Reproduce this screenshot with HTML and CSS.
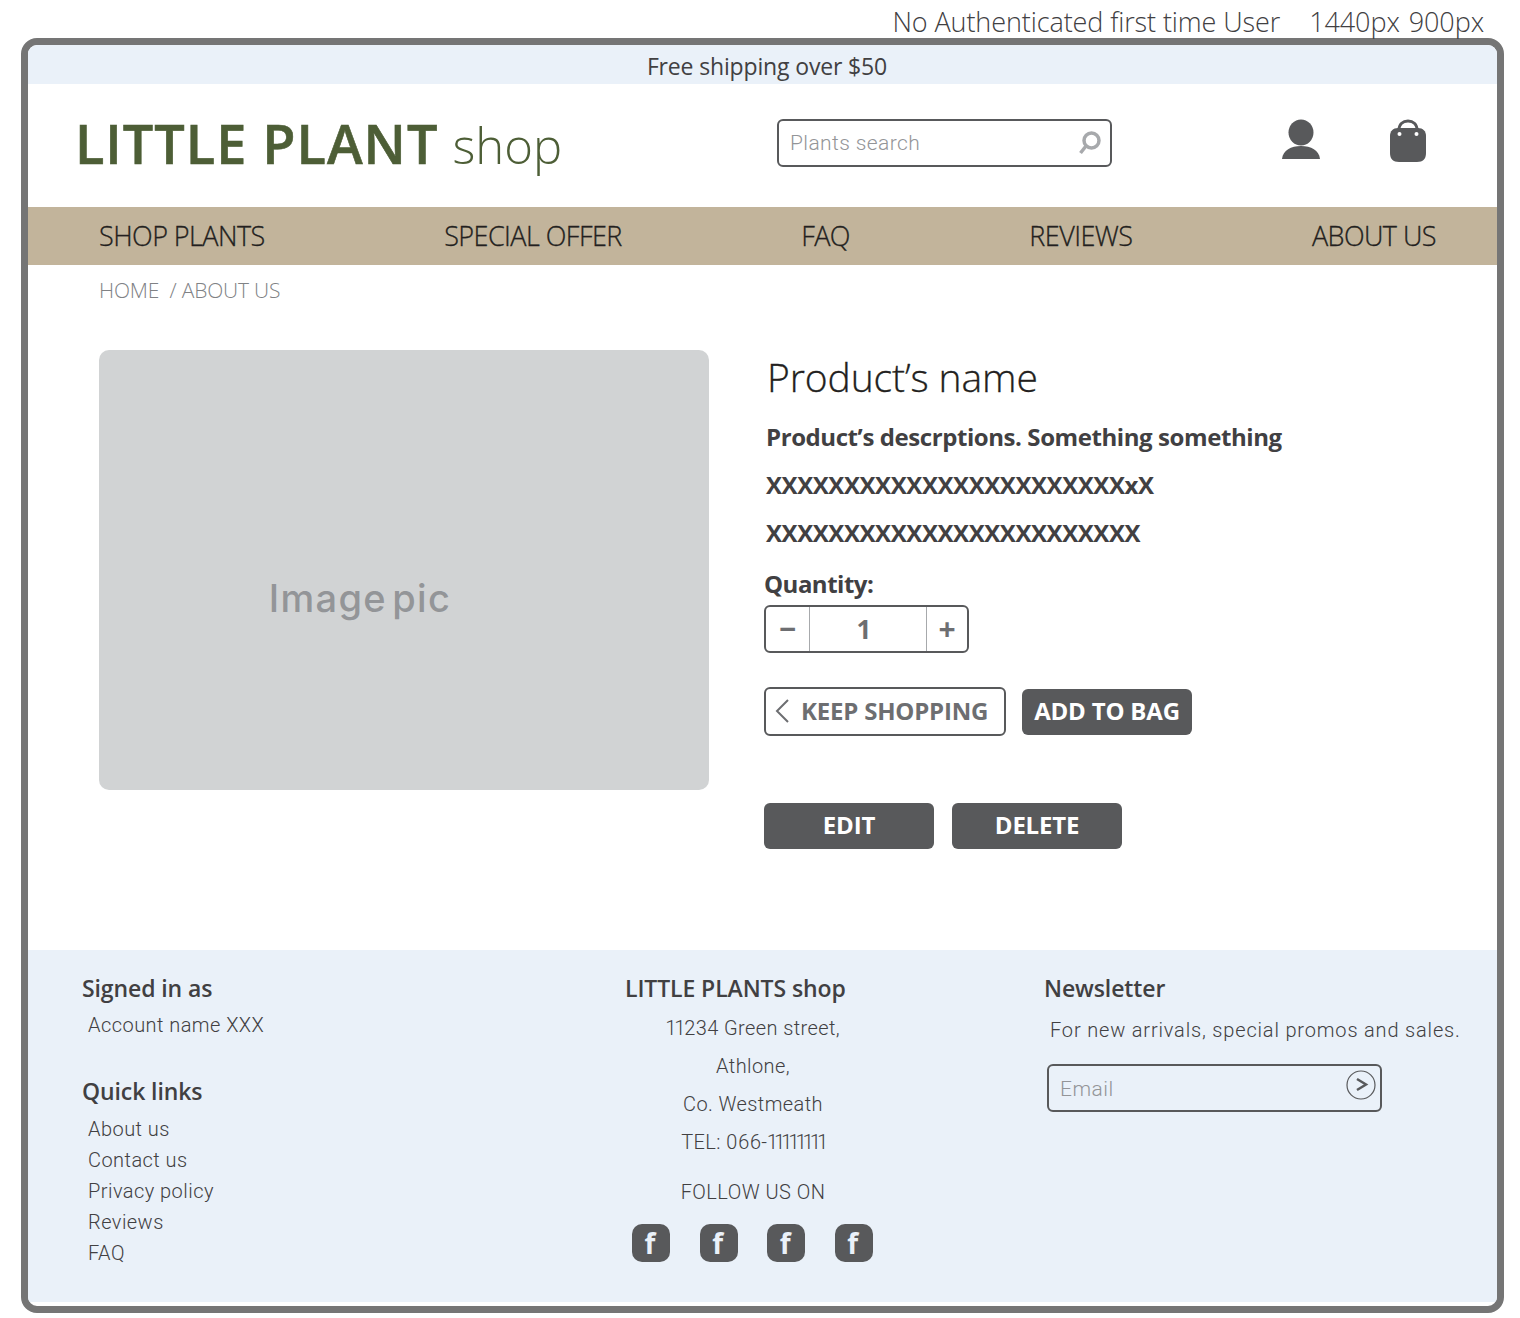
FILE: index.html
```html
<!DOCTYPE html>
<html lang="en">
<head>
    <meta charset="UTF-8">
    <meta name="viewport" content="width=device-width, initial-scale=1.0">
    <title>Little Plant shop</title>
    <link rel="stylesheet" href="styles.css">
</head>
<body>
    <div class="note"><span>No Authenticated first time User</span><span>1440px</span><span>900px</span></div>

    <div class="frame">
        <div class="promo">Free shipping over $50</div>

        <header class="header">
            <div class="logo"><b>LITTLE PLANT</b> <span>shop</span></div>
            <div class="search">
                <span>Plants search</span>
                <svg width="26" height="28" viewBox="0 0 26 28"><circle cx="14.5" cy="11.5" r="7.5" fill="none" stroke="#a7a9ac" stroke-width="3.500"/><path d="M9 17 L3.500 24" stroke="#a7a9ac" stroke-width="3.500"/></svg>
            </div>
            <div class="header-icons">
                <svg width="40" height="42" viewBox="0 0 40 42"><ellipse cx="20" cy="13.500" rx="12.500" ry="13" fill="#58595b"/><path d="M1 40 C2 31 10 27 20 27 C30 27 38 31 39 40 Z" fill="#58595b"/></svg>
                <svg width="38" height="44" viewBox="0 0 38 44"><path d="M10 16 V11 C10 5 14 2 19 2 C24 2 28 5 28 11 V16" fill="none" stroke="#58595b" stroke-width="3"/><path d="M9 9 H29 C34 9 37 12 37 17 V34 C37 40 34 43 28 43 H10 C4 43 1 40 1 34 V17 C1 12 4 9 9 9 Z" fill="#58595b"/><circle cx="10.500" cy="15" r="2" fill="#fff"/><circle cx="27.500" cy="15" r="2" fill="#fff"/></svg>
            </div>
        </header>

        <nav class="nav">
            <a>SHOP PLANTS</a>
            <a>SPECIAL OFFER</a>
            <a>FAQ</a>
            <a>REVIEWS</a>
            <a>ABOUT US</a>
        </nav>

        <div class="crumbs">HOME &nbsp;/ ABOUT US</div>

        <main class="product">
            <div class="pic">Image pic</div>
            <div class="info">
                <h1>Product’s name</h1>
                <p class="desc">Product’s descrptions. Something something</p>
                <p class="desc">XXXXXXXXXXXXXXXXXXXXXXXxX</p>
                <p class="desc">XXXXXXXXXXXXXXXXXXXXXXXX</p>
                <div class="qty-label">Quantity:</div>
                <div class="qty">
                    <span class="qty-btn">−</span>
                    <span class="qty-num">1</span>
                    <span class="qty-btn">+</span>
                </div>
                <div class="row">
                    <button class="btn btn-outline">
                        <svg width="16" height="24" viewBox="0 0 16 24"><path d="M14 1 L3 12 L14 23" fill="none" stroke="#6d6e71" stroke-width="2"/></svg>
                        KEEP SHOPPING
                    </button>
                    <button class="btn btn-dark btn-wide">ADD TO BAG</button>
                </div>
                <div class="row row-admin">
                    <button class="btn btn-dark btn-wide">EDIT</button>
                    <button class="btn btn-dark btn-wide">DELETE</button>
                </div>
            </div>
        </main>

        <footer class="footer">
            <div class="col-left">
                <h4>Signed in as</h4>
                <ul class="links">
                    <li>Account name XXX</li>
                </ul>
                <h4 class="quick">Quick links</h4>
                <ul class="links">
                    <li>About us</li>
                    <li>Contact us</li>
                    <li>Privacy policy</li>
                    <li>Reviews</li>
                    <li>FAQ</li>
                </ul>
            </div>
            <div class="col-mid">
                <h4>LITTLE PLANTS shop</h4>
                <address class="addr">
                    <div>11234 Green street,</div>
                    <div>Athlone,</div>
                    <div>Co. Westmeath</div>
                    <div>TEL: 066-<span class="tel-ones">11111111</span></div>
                </address>
                <div class="follow">FOLLOW US ON</div>
                <div class="social">
                    <span>f</span>
                    <span>f</span>
                    <span>f</span>
                    <span>f</span>
                </div>
            </div>
            <div class="col-right">
                <h4>Newsletter</h4>
                <p class="news">For new arrivals, special promos and sales.</p>
                <div class="email">
                    <span>Email</span>
                    <svg width="30" height="30" viewBox="0 0 30 30"><circle cx="15" cy="15" r="14" fill="none" stroke="#58595b" stroke-width="1.200"/><path d="M11 9 L20 14.500 L11 20" fill="none" stroke="#58595b" stroke-width="2.500"/></svg>
                </div>
            </div>
        </footer>
    </div>
</body>
</html>
```

FILE: styles.css
```css
body {
    margin: 0;
    font-family: "Open Sans", "Noto Sans", sans-serif;
    background-color: #fff;
    color: #414042;
}

h1, h4, p, ul {
    margin: 0;
    padding: 0;
}

/* annotation above the wireframe */
.note {
    height: 38px;
    box-sizing: border-box;
    padding: 4px 36px 0 0;
    display: flex;
    justify-content: flex-end;
    align-items: center;
    gap: 29px;
    font-size: 27px;
    font-weight: 300;
    letter-spacing: -0.1px;
    color: #414042;
}

.note span:last-child {
    margin-left: -20px;
}

.frame {
    width: 1469px;
    height: 1261px;
    margin-left: 21px;
    border: 7px solid #757575;
    border-radius: 16px;
    overflow: hidden;
    display: flex;
    flex-direction: column;
}

.promo {
    height: 39px;
    line-height: 43px;
    background-color: #eaf1f9;
    text-align: center;
    font-size: 23px;
    letter-spacing: -0.15px;
    padding-left: 9px;
    box-sizing: border-box;
}

.header {
    height: 123px;
    display: flex;
    align-items: center;
    padding-left: 47px;
}

.logo {
    width: 702px;
    color: #4d5e36;
    font-size: 54px;
    padding-bottom: 6px;
}

.logo b {
    font-weight: 600;
    letter-spacing: 1px;
    -webkit-text-stroke: 0.6px #4d5e36;
}

.logo span {
    font-size: 49px;
    font-weight: 300;
}

.search {
    width: 335px;
    height: 48px;
    box-sizing: border-box;
    border: 2px solid #58595b;
    border-radius: 6px;
    display: flex;
    justify-content: space-between;
    align-items: center;
    padding: 1px 7px 0 11px;
    margin-top: -6px;
    font-family: Roboto, sans-serif;
    font-size: 21px;
    font-weight: 300;
    letter-spacing: 0.4px;
    color: #939598;
}

.header-icons {
    display: flex;
    align-items: flex-start;
    gap: 68px;
    margin-left: 169px;
    margin-top: -10px;
}

.nav {
    height: 58px;
    padding: 0 61px 2px 71px;
    box-sizing: border-box;
    background-color: #c2b49b;
    display: flex;
    justify-content: space-between;
    align-items: center;
    font-size: 27px;
    font-weight: 300;
    letter-spacing: -0.55px;
    -webkit-text-stroke: 0.3px #231f20;
    color: #231f20;
}

.crumbs {
    height: 85px;
    padding: 11px 0 0 71px;
    box-sizing: border-box;
    font-size: 21px;
    font-weight: 300;
    letter-spacing: -0.2px;
    color: #808285;
}

.product {
    height: 600px;
    display: flex;
    padding-left: 71px;
    box-sizing: border-box;
}

.pic {
    width: 610px;
    height: 440px;
    background-color: #d1d3d4;
    border-radius: 10px;
    display: flex;
    justify-content: center;
    align-items: center;
    font-family: Inter, sans-serif;
    font-size: 38px;
    font-weight: 500;
    letter-spacing: 1.3px;
    word-spacing: -6px;
    color: #939598;
    padding: 56px 88px 0 0;
    box-sizing: border-box;
}

.info {
    margin-left: 55px;
}

h1 {
    font-size: 39px;
    font-weight: 300;
    letter-spacing: -0.1px;
    -webkit-text-stroke: 0.3px #231f20;
    color: #231f20;
    line-height: 56px;
    margin: -1px 0 8px 3px;
}

.desc {
    font-size: 24px;
    font-weight: 700;
    letter-spacing: -0.42px;
    line-height: 48px;
    margin-left: 2px;
}

.qty-label {
    font-size: 24px;
    font-weight: 700;
    letter-spacing: -0.5px;
    line-height: 32px;
    margin-top: 11px;
}

.qty {
    width: 205px;
    height: 48px;
    margin-top: 5px;
    box-sizing: border-box;
    border: 2px solid #58595b;
    border-radius: 6px;
    display: flex;
    align-items: center;
    font-size: 26px;
    font-weight: 700;
    color: #6d6e71;
}

.qty-btn {
    width: 43px;
    text-align: center;
    font-size: 30px;
    line-height: 44px;
}

.qty-btn:first-child {
    border-right: 1px solid #a7a9ac;
}

.qty-btn:last-child {
    border-left: 1px solid #a7a9ac;
    width: 40px;
}

.qty-num {
    flex: 1;
    text-align: center;
    padding-right: 8px;
}

.row {
    display: flex;
    align-items: center;
    gap: 16px;
    margin-top: 34px;
}

.row-admin {
    margin-top: 67px;
    gap: 18px;
}

.btn {
    height: 46px;
    border-radius: 6px;
    font-family: inherit;
    font-size: 24px;
    font-weight: 700;
    letter-spacing: -0.2px;
    padding: 0 0 3px;
    box-sizing: border-box;
    display: flex;
    align-items: center;
    justify-content: center;
}

.btn-outline {
    width: 242px;
    height: 49px;
    gap: 11px;
    justify-content: flex-start;
    background-color: #fff;
    border: 2px solid #58595b;
    color: #6d6e71;
    padding: 0 8px 2px;
}

.btn-dark {
    background-color: #58595b;
    border: none;
    color: #fff;
}

.btn-wide {
    width: 170px;
}

.footer {
    height: 352px;
    background-color: #eaf1f9;
    display: grid;
    grid-template-columns: 543px 419px 1fr;
    padding: 22px 0 0 54px;
    box-sizing: border-box;
}

h4 {
    font-size: 23px;
    font-weight: 600;
    letter-spacing: -0.1px;
    line-height: 32px;
}

.quick {
    margin: 34px 0 1px;
}

.links {
    list-style: none;
    margin: 0 0 0 6px;
    font-family: Roboto, sans-serif;
    font-size: 20px;
    font-weight: 300;
    letter-spacing: 0.45px;
    line-height: 31px;
    padding-top: 6px;
}

.addr {
    font-style: normal;
    width: 256px;
    text-align: center;
    font-family: Roboto, sans-serif;
    font-size: 20px;
    font-weight: 300;
    letter-spacing: 0.4px;
    font-variant-numeric: proportional-nums;
    line-height: 38px;
    margin-top: 5px;
}

.tel-ones {
    letter-spacing: -1.6px;
}

.follow {
    width: 256px;
    text-align: center;
    font-family: Roboto, sans-serif;
    font-size: 20px;
    font-weight: 300;
    letter-spacing: 0.45px;
    margin-top: 19px;
}

.social {
    display: flex;
    gap: 29.6px;
    margin: 20px 0 0 7px;
}

.social span {
    width: 36px;
    height: 38px;
    padding-right: 2px;
    border-radius: 10px;
    background-color: #58595b;
    color: #eaf1f9;
    font-family: "Open Sans", sans-serif;
    font-size: 28px;
    font-weight: 700;
    line-height: 38px;
    text-align: center;
}

.news {
    margin: 11px 0 0 6px;
    font-family: Roboto, sans-serif;
    font-size: 20px;
    font-weight: 300;
    letter-spacing: 0.83px;
    line-height: 30px;
}

.email {
    width: 335px;
    height: 48px;
    margin: 19px 0 0 3px;
    box-sizing: border-box;
    border: 2px solid #58595b;
    border-radius: 6px;
    display: flex;
    justify-content: space-between;
    padding: 4px 4px 0 11px;
    font-family: Roboto, sans-serif;
    font-size: 21px;
    font-weight: 300;
    letter-spacing: 0.5px;
    line-height: 38px;
    color: #939598;
}
```
